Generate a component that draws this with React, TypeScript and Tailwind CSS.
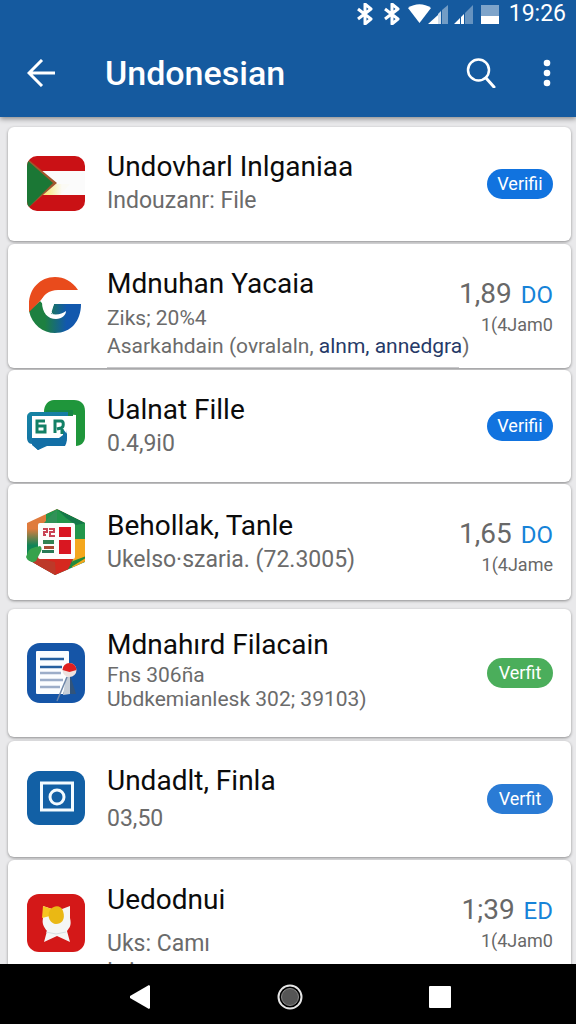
import type { ReactNode } from "react";
import clsx from "clsx";

type Row = {
  title: string;
  lines: ReactNode[];
  icon: ReactNode;
  badge?: { label: string; color: string };
  amount?: { value: string; unit: string; note: string };
  gapClass?: string;
  bodyClass: string;
  linesClass: string;
};

function FlagIcon() {
  return (
    <svg viewBox="0 0 60 60" className="size-15">
      <defs>
        <clipPath id="flag">
          <rect x="1" y="2" width="58" height="55" rx="10" />
        </clipPath>
        <linearGradient id="cream" x1="0" x2="1">
          <stop offset="0.1" stopColor="#f8ea7a" />
          <stop offset="0.7" stopColor="#fbfaf5" />
        </linearGradient>
      </defs>
      <g clipPath="url(#flag)">
        <rect width="60" height="60" fill="#fbfbfb" />
        <path d="M17 41l13-11h14L34 41z" fill="url(#cream)" />
        <path d="M0 0h60v17H0zM0 41h60v19H0z" fill="#ca1115" />
        <path d="M0 4l3 2 28 23L3 53l-3 3z" fill="#a2572c" />
        <path d="M0 6l2 1 25 22L3 53l-3 1z" fill="#1b7735" />
      </g>
    </svg>
  );
}

function GoogleIcon() {
  return (
    <svg viewBox="0 0 60 60" className="size-15">
      <defs>
        <linearGradient id="gbase" x1="0" y1="0" x2="1" y2="0">
          <stop offset="0.3" stopColor="#1d8040" />
          <stop offset="0.72" stopColor="#1258ad" />
        </linearGradient>
      </defs>
      <path d="M14 25L3 35c3 14 14 22 26 22 16 0 26-12 26-29H28l-3 7 3 5z" fill="url(#gbase)" />
      <path d="M52 14C46 5 38 1 29 1 14 1 3 13 3 28v8l12-12c4-6 8-8 15-8z" fill="#e94b1c" />
      <path d="M53 14H32c-9 0-16 5-16 12 0 11 6 17 14 17 6 0 10-4 10-8-4 3-8 4-15 3l3-10h27z" fill="#fff" />
    </svg>
  );
}

function ChatIcon() {
  return (
    <svg viewBox="0 0 60 60" className="size-15">
      <defs>
        <linearGradient id="chat" x1="0" y1="0" x2="0.5" y2="1">
          <stop offset="0" stopColor="#1685a4" />
          <stop offset="1" stopColor="#136ca5" />
        </linearGradient>
      </defs>
      <path d="M18 16c0-7 4-12 10-12h20c7 0 11 4 11 11v26c0 5-4 9-9 9V19z" fill="#1f963b" />
      <path d="M20 14h27v6H19z" fill="#178747" />
      <path d="M6 16h36v7h8v14c0 8-4 13-11 13H21l-9 4-6-6c-3 0-5-3-5-6V21c0-3 2-5 5-5z" fill="url(#chat)" />
      <path d="M6 20h37l7 1v29H39c2-3 2-7 2-12l-4-5v6l-4 3H6z" fill="#fff" />
      <path d="M6 42h29c4 0 6-3 6-9v7c0 7-3 10-9 10H19l-7 4-6-5z" fill="#136fa6" />
      <path d="M19 25h-8v11h8v-6h-8M29 37V25h6c3 0 3 6 0 7l-4 1M36 33v5" fill="none" stroke="#128066" strokeWidth="3" />
    </svg>
  );
}

function HexIcon() {
  return (
    <svg viewBox="0 0 60 66" className="h-[66px] w-15">
      <defs>
        <clipPath id="hex">
          <path d="M31 0l28 14v39L29 66 1 50V14z" />
        </clipPath>
        <linearGradient id="hexleft" x1="0" y1="0" x2="0" y2="1">
          <stop offset="0.3" stopColor="#df7b3d" />
          <stop offset="0.55" stopColor="#118456" />
        </linearGradient>
      </defs>
      <g clipPath="url(#hex)">
        <rect width="60" height="66" fill="url(#hexleft)" />
        <path d="M20 5L31 0l29 14v17H46V14H20z" fill="#22964b" />
        <path d="M31 0l29 14-10 2-10-7z" fill="#147849" />
        <path d="M31 0v14H18z" fill="#329158" />
        <path d="M48 30h12v22L46 60z" fill="#f4a71d" />
        <path d="M10 47h38l-8 19H24L8 54z" fill="#d5281f" />
        <path d="M11 49l18 4 1 13L4 54z" fill="#bd3929" />
        <path d="M60 49L42 60l5-8 13-5z" fill="#218b3b" />
      </g>
      <rect x="12" y="14" width="37" height="36" rx="2" fill="#fdfdfb" />
      <path d="M33 18h12v10H33zM33 31h12v14H33z" fill="#d91721" />
      <path d="M17 20h4v3h-3v4M23 20h5v3h-4v4h5M17 26h3" fill="none" stroke="#c94454" strokeWidth="2" />
      <path d="M17 31h11v4H17z" fill="#328352" />
      <path d="M18 37h10v3H18z" fill="#a94b34" />
      <path d="M16 41h12v3H16z" fill="#287954" />
      <path d="M2 43c1-4 8-5 12-6 3 2 1 6-1 9l-3 6c-4 3-9-1-10-4z" fill="#36a24c" />
    </svg>
  );
}

function DocumentIcon() {
  return (
    <svg viewBox="0 0 60 60" className="size-15">
      <rect x="1" y="0" width="58" height="60" rx="13" fill="#1555a7" />
      <rect x="10" y="8" width="33" height="43" rx="1" fill="#fbfdff" />
      <path d="M14 16h24M14 24h22" stroke="#255f9f" strokeWidth="2.5" />
      <path d="M14 30h21M14 37h23M14 44h20" stroke="#9cadc9" strokeWidth="2.5" />
      <path d="M44 32l6 19H37z" fill="#31547b" />
      <path d="M40 34l4-1v18l-7 1z" fill="#c6ced8" />
      <path d="M41 34L31 58" stroke="#6e86a8" strokeWidth="1.5" />
      <circle cx="43.500" cy="27" r="7" fill="#eee2df" />
      <path d="M36.500 27a7 7 0 0114 0l-7 2z" fill="#df2020" />
    </svg>
  );
}

function CameraIcon() {
  return (
    <svg viewBox="0 0 60 60" className="size-15">
      <rect x="1" y="2" width="58" height="54" rx="12" fill="#1260a5" />
      <rect x="15.500" y="14" width="31" height="27" fill="none" stroke="#f3fbff" strokeWidth="3" />
      <circle cx="31" cy="28" r="7" fill="none" stroke="#f3fbff" strokeWidth="3" />
    </svg>
  );
}

function MedalIcon() {
  return (
    <svg viewBox="0 0 60 60" className="size-15">
      <rect x="1" y="1" width="58" height="58" rx="12" fill="#d41818" />
      <path d="M17 13l9 3h10l8-3v12c2 8-1 10-3 13l3 11-13-6-13 6 3-11c-4-5-5-8-4-13z" fill="#f5f6f5" />
      <path d="M17 13l9 3-2 7-8 2z" fill="#f7c521" />
      <path d="M24 17c4-5 11-5 13 1 3 9-2 13-7 13s-10-7-6-14z" fill="#eab814" />
      <path d="M20 39l10 2 10-2" fill="none" stroke="#d7e0e2" />
    </svg>
  );
}

const rows: Row[] = [
  {
    title: "Undovharl Inlganiaa",
    lines: ["Indouzanr: File"],
    icon: <FlagIcon />,
    badge: { label: "Verifii", color: "bg-[#1173df]" },
    bodyClass: "pt-6 pb-[26px]",
    linesClass: "mt-1 text-[23px] leading-7",
  },
  {
    title: "Mdnuhan Yacaia",
    lines: [
      "Ziks; 20%4",
      <>
        Asarkahdain (ovralaln, <span className="text-[#263a68]">alnm, annedgra</span>)
      </>,
    ],
    icon: <GoogleIcon />,
    amount: { value: "1,89", unit: "DO", note: "1(4Jam0" },
    gapClass: "mt-[3px]",
    bodyClass: "pt-6 pb-[7px] border-b border-[#c9c9cb]",
    linesClass: "mt-1 text-[21px] leading-7",
  },
  {
    title: "Ualnat Fille",
    lines: ["0.4,9i0"],
    icon: <ChatIcon />,
    badge: { label: "Verifii", color: "bg-[#1173df]" },
    gapClass: "mt-0.5",
    bodyClass: "py-6",
    linesClass: "mt-1 text-[23px] leading-7",
  },
  {
    title: "Behollak, Tanle",
    lines: ["Ukelso·szaria. (72.3005)"],
    icon: <HexIcon />,
    amount: { value: "1,65", unit: "DO", note: "1(4Jame" },
    gapClass: "mt-0.5",
    bodyClass: "pt-[26px] pb-[26px]",
    linesClass: "mt-1 text-[23px] leading-7",
  },
  {
    title: "Mdnahırd Filacain",
    lines: ["Fns 306ña", "Ubdkemianlesk 302; 39103)"],
    icon: <DocumentIcon />,
    badge: { label: "Verfit", color: "bg-[#4bae5b]" },
    gapClass: "mt-[9px]",
    bodyClass: "pt-5 pb-[26px]",
    linesClass: "mt-0.5 text-[21px] leading-6",
  },
  {
    title: "Undadlt, Finla",
    lines: ["03,50"],
    icon: <CameraIcon />,
    badge: { label: "Verfit", color: "bg-[#2a7bd5]" },
    gapClass: "mt-1",
    bodyClass: "py-6",
    linesClass: "mt-2 text-[23px] leading-7",
  },
  {
    title: "Uedodnui",
    lines: ["Uks: Camı", "Lvinanna"],
    icon: <MedalIcon />,
    amount: { value: "1;39", unit: "ED", note: "1(4Jam0" },
    gapClass: "mt-[3px]",
    bodyClass: "pt-6",
    linesClass: "mt-3.5 text-[23px] leading-7",
  },
];

function FileCard({ row }: { row: Row }) {
  return (
    <li
      className={clsx(
        "flex items-center rounded-md bg-white px-[18px] shadow-[0_1px_3px_rgba(0,0,0,0.4)]",
        row.gapClass
      )}
    >
      <div className="shrink-0">{row.icon}</div>
      <div className={clsx("ml-[21px] min-w-0 flex-1 whitespace-nowrap", row.bodyClass)}>
        <h2 className="text-[28px] leading-8 text-[#0b0b0b]">{row.title}</h2>
        <div className={clsx("text-[#6b6b6b]", row.linesClass)}>
          {row.lines.map((line, i) => (
            <p key={i}>{line}</p>
          ))}
        </div>
      </div>
      {row.badge && (
        <button className={clsx("h-[30px] w-[66px] rounded-full text-lg leading-none text-white", row.badge.color)}>
          {row.badge.label}
        </button>
      )}
      {row.amount && (
        <div className="shrink-0 self-start pt-[34px] text-right text-[#686868]">
          <p className="text-[28px] leading-8">
            {row.amount.value} <span className="ml-0.5 text-2xl text-[#1683d8]">{row.amount.unit}</span>
          </p>
          <p className="text-lg leading-7">{row.amount.note}</p>
        </div>
      )}
    </li>
  );
}

function Bluetooth() {
  return (
    <svg viewBox="0 0 16 22" className="h-[22px] w-4" fill="none" stroke="currentColor" strokeWidth="3">
      <path d="M1 6l13 10-6 5V1l6 5L1 16" strokeLinejoin="round" />
    </svg>
  );
}

function StatusBar() {
  return (
    <div className="flex h-7 items-center justify-end pr-2.5">
      <div className="flex gap-[11px]">
        <Bluetooth />
        <Bluetooth />
      </div>
      <svg viewBox="0 0 40 20" className="ml-2 h-5 w-10" fill="currentColor">
        <path d="M0 4C7-1 16-1 23 4L11.500 19z" />
        <path d="M20 20l10-9v9z" />
        <path d="M30 10l3-3v13h-3z" opacity="0.8" />
        <path d="M34 6l6-5v19h-6z" opacity="0.4" />
      </svg>
      <svg viewBox="0 0 19 20" className="ml-1.5 h-5 w-[19px]" fill="currentColor">
        <path d="M0 20l6-6v6zM7 13l3-3v10H7z" />
        <path d="M11 9l8-8v19h-8z" opacity="0.35" />
      </svg>
      <svg viewBox="0 0 18 20" className="ml-2 h-5 w-[18px]" fill="currentColor">
        <path d="M0 1h18v11H0z" opacity="0.45" />
        <path d="M0 12h18v8H0z" />
      </svg>
      <span className="ml-2.5 text-[23px] leading-7">19:26</span>
    </div>
  );
}

export default function App() {
  return (
    <div className="flex h-screen flex-col overflow-hidden bg-[#e9e9eb] font-['Roboto',sans-serif]">
      <header className="relative shrink-0 bg-[#155a9f] text-white shadow-[0_2px_5px_rgba(0,0,0,0.4)]">
        <StatusBar />
        <div className="flex h-[89px] items-center pr-[9px] pl-[21px]">
          <button aria-label="Back" className="flex size-10 items-center justify-center">
            <svg viewBox="0 0 28 28" className="size-7" fill="none" stroke="currentColor" strokeWidth="3">
              <path d="M28 14H2M15 1L2 14l13 13" />
            </svg>
          </button>
          <h1 className="ml-11 flex-1 text-[34px] leading-10 font-medium">Undonesian</h1>
          <button aria-label="Search" className="flex size-10 items-center justify-center">
            <svg viewBox="0 0 30 30" className="size-[30px]" fill="none" stroke="currentColor" strokeWidth="2.500">
              <circle cx="12.500" cy="12" r="10.500" />
              <path d="M20 20l8 9" strokeWidth="3" strokeLinecap="round" />
            </svg>
          </button>
          <button aria-label="More options" className="ml-[26px] flex size-10 items-center justify-center">
            <svg viewBox="0 0 8 28" className="h-7 w-2" fill="currentColor">
              <circle cx="4" cy="4" r="3.300" />
              <circle cx="4" cy="14" r="3.300" />
              <circle cx="4" cy="24" r="3.300" />
            </svg>
          </button>
        </div>
      </header>
      <main className="min-h-0 flex-1 overflow-hidden pt-2.5 pr-[5px] pl-2">
        <ul>
          {rows.map((row) => (
            <FileCard key={row.title} row={row} />
          ))}
        </ul>
      </main>
      <nav className="relative flex h-15 shrink-0 items-center justify-center gap-[102px] bg-black pt-1.5 pl-1 text-white">
        <button aria-label="Back" className="flex size-12 items-center justify-center">
          <svg viewBox="0 0 22 24" className="h-6 w-[22px]" fill="currentColor">
            <path d="M1 11L20 0l1 1v22l-1 1L1 13z" />
          </svg>
        </button>
        <button aria-label="Home" className="flex size-12 items-center justify-center">
          <svg viewBox="0 0 26 26" className="size-[26px]">
            <circle cx="13" cy="13" r="11.500" fill="#000" stroke="#e5e5e5" strokeWidth="2" />
            <circle cx="13" cy="13" r="8.500" fill="#555" stroke="#888" />
          </svg>
        </button>
        <button aria-label="Recent apps" className="flex size-12 items-center justify-center">
          <svg viewBox="0 0 22 22" className="size-[22px]" fill="currentColor">
            <rect width="22" height="22" rx="1" />
          </svg>
        </button>
      </nav>
    </div>
  );
}
